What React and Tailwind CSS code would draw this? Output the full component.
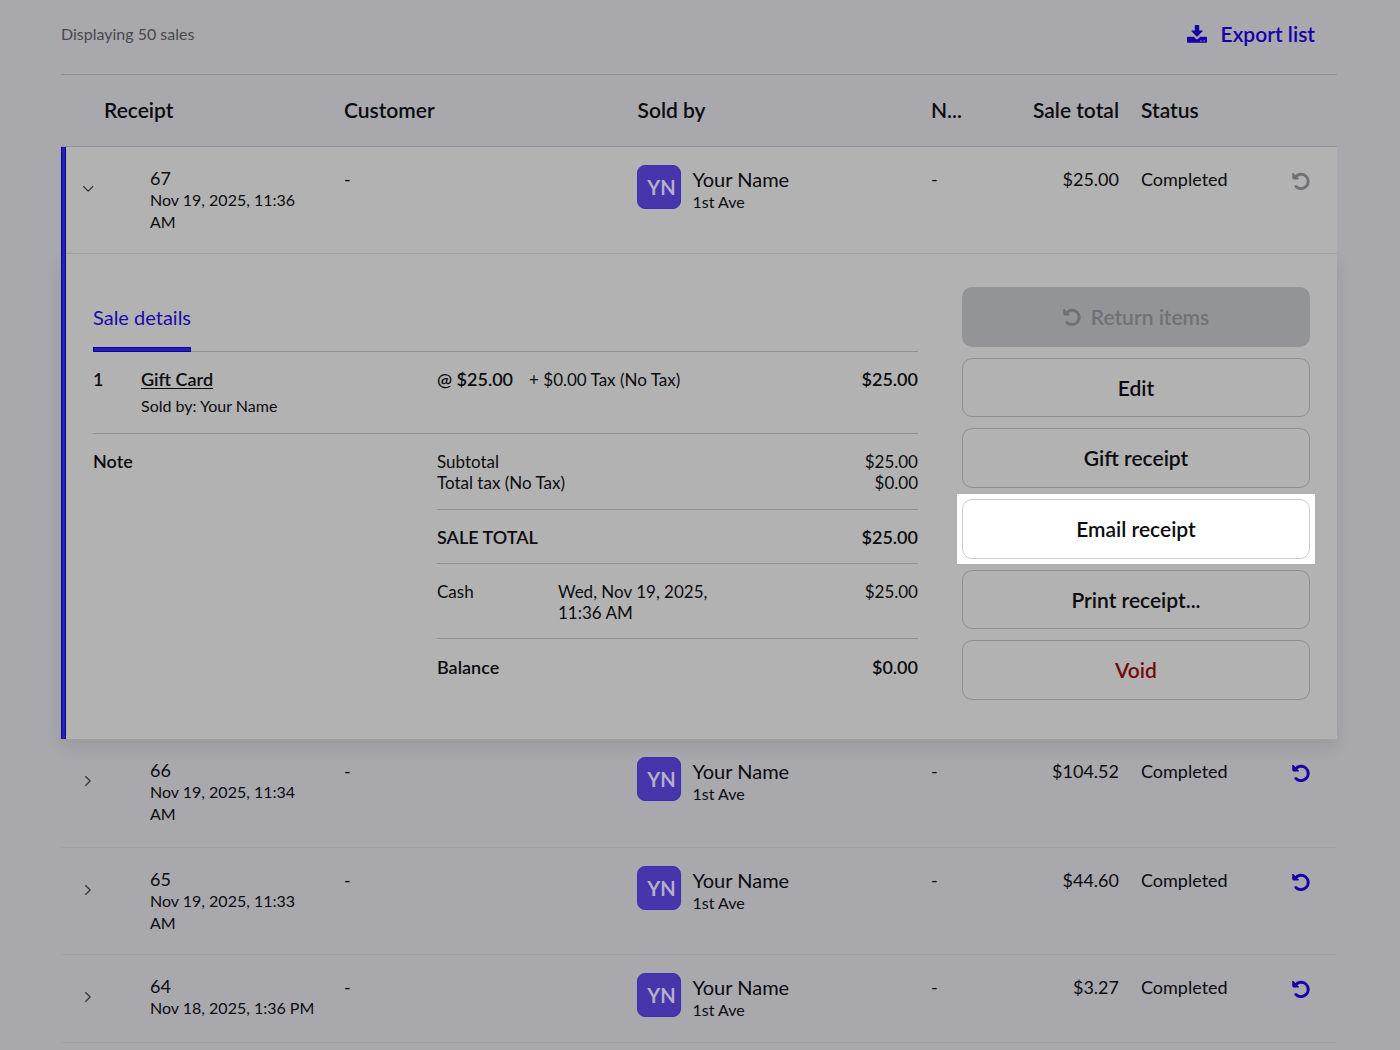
const buttonBase =
  "flex h-full w-full items-center justify-center gap-2 rounded-[10px] text-[21px] font-semibold";

const sales = [
  { id: "67", date: "Nov 19, 2025, 11:36 AM", total: "$25.00", open: true, height: "h-[107px]" },
  { id: "66", date: "Nov 19, 2025, 11:34 AM", total: "$104.52", height: "h-[109px]" },
  { id: "65", date: "Nov 19, 2025, 11:33 AM", total: "$44.60", height: "h-[107px]" },
  { id: "64", date: "Nov 18, 2025, 1:36 PM", total: "$3.27", height: "h-[88px]" },
];

function UndoIcon({ className }) {
  return (
    <svg viewBox="0 0 18 18" className={className} fill="none" aria-hidden="true">
      <path d="M3.4 4.9A7.2 7.2 0 1 1 3.9 14.5" stroke="currentColor" strokeWidth="2.9" strokeLinecap="round" />
      <path d="M.8 1V6.3Q.8 7 1.5 7H6.6Z" fill="currentColor" stroke="currentColor" strokeWidth="1" strokeLinejoin="round" />
    </svg>
  );
}

function DownloadIcon({ className }) {
  return (
    <svg viewBox="0 0 20 18" className={className} fill="currentColor" aria-hidden="true">
      <path d="M7.8.6Q7.8 0 8.4 0h3.2q.6 0 .6.6V5.6h3q.9 0 .3.7L10.5 11.4q-.5.5-1 0L4.500 6.300q-.6-.7.3-.7h3Z" />
      <path
        fillRule="evenodd"
        d="M1 11.800h5.900l1.900 1.900q1.200 1.100 2.400 0l1.900-1.900H19q1 0 1 1V16.800q0 1-1 1H1q-1 0-1-1V12.800q0-1 1-1ZM13.300 15.200v1.200h1.200v-1.200ZM16.500 15.200v1.200h1.200v-1.200Z"
      />
    </svg>
  );
}

function Chevron({ open }) {
  return (
    <svg viewBox="0 0 12 12" className="size-3" fill="none" stroke="currentColor" strokeWidth="1.3" aria-hidden="true">
      <path d={open ? "M1.3 3.3 6.2 8.2l4.900-4.900" : "M3.300 1.200 8.100 6 3.300 10.800"} />
    </svg>
  );
}

function SaleDetails() {
  return (
    <div className="flex h-[485px] gap-11 pt-[33px] pr-[27px] pl-8 shadow-[0_8px_16px_rgba(0,0,0,0.09)]">
      <div className="min-w-0 flex-1 text-[17px] leading-[21px]">
        <div className="flex h-[65px] border-b border-[#919195]">
          <button type="button" className="relative flex h-[65px] pt-[18px] text-xl leading-6 text-[#1a0aa6]">
            Sale details
            <span className="absolute inset-x-0 bottom-0 h-[5px] border border-[#0900a8] bg-[#2721ac]" />
          </button>
        </div>
        <div className="grid h-[82px] grid-cols-[48px_296px_1fr_auto] border-b border-[#919195] pt-[17px]">
          <strong className="text-lg leading-[21px] font-semibold">1</strong>
          <div>
            <a href="#gift-card" className="text-lg leading-[21px] font-semibold underline underline-offset-2">Gift Card</a>
            <p className="pt-1.5 text-base leading-5">Sold by: Your Name</p>
          </div>
          <div className="flex gap-4">
            <strong className="text-lg leading-[21px] font-semibold">@ $25.00</strong>
            <span>+ $0.00 Tax (No Tax)</span>
          </div>
          <strong className="text-lg leading-[21px] font-semibold">$25.00</strong>
        </div>
        <div className="grid grid-cols-[344px_1fr]">
          <h2 className="pt-[17px] text-lg leading-[21px] font-semibold">Note</h2>
          <div>
            <div className="h-[76px] border-b border-[#919195] pt-[17px]">
              <p className="flex justify-between"><span>Subtotal</span><span>$25.00</span></p>
              <p className="flex justify-between"><span>Total tax (No Tax)</span><span>$0.00</span></p>
            </div>
            <p className="flex h-[54px] items-center justify-between border-b border-[#919195] text-lg font-semibold">
              <span>SALE TOTAL</span><span>$25.00</span>
            </p>
            <div className="grid h-[75px] grid-cols-[121px_180px_1fr] border-b border-[#919195] pt-[17px]">
              <span>Cash</span>
              <span>Wed, Nov 19, 2025, 11:36 AM</span>
              <span className="text-right">$25.00</span>
            </div>
            <p className="flex h-[55px] items-center justify-between text-lg font-semibold">
              <span>Balance</span><span>$0.00</span>
            </p>
          </div>
        </div>
      </div>
      <div className="grid h-[413px] w-[348px] auto-rows-fr gap-[11px]">
        <button type="button" disabled className={`${buttonBase} bg-[#939498] text-[#707175]`}>
          <UndoIcon className="mr-0.5 size-[18px]" />
          Return items
        </button>
        <button type="button" className={`${buttonBase} border border-[#8d8e92]`}>Edit</button>
        <button type="button" className={`${buttonBase} border border-[#8d8e92]`}>Gift receipt</button>
        <div className="-m-[5px] bg-white p-[5px]">
          <button type="button" className={`${buttonBase} border border-[#c9cad0]`}>Email receipt</button>
        </div>
        <button type="button" className={`${buttonBase} border border-[#8d8e92]`}>Print receipt...</button>
        <button type="button" className={`${buttonBase} border border-[#8d8e92] text-[#730a0c]`}>Void</button>
      </div>
    </div>
  );
}

function SaleRow({ sale }) {
  const { open } = sale;
  const line = open ? "border-b border-[#9ea3a3]" : "border-b border-[#a0a0a5]";
  const cell = `${line} px-[11px] pt-[21px] text-lg leading-[22px]`;
  return (
    <tr className={`align-top ${sale.height} ${open ? "bg-[#b2b2b2]" : ""}`}>
      <td className={`${line} relative pt-8 pl-[21px] text-[#38383c]`}>
        {open && (
          <span className="absolute top-0 bottom-[-1px] left-0 w-[5px] border-x border-[#0900a8] bg-[#2721ac]" />
        )}
        <button type="button" aria-label={`Toggle sale ${sale.id}`} aria-expanded={!!open} className="flex size-3 pt-1">
          <Chevron open={open} />
        </button>
      </td>
      <td className={cell}>
        <p className="leading-[21px]">{sale.id}</p>
        <p className="text-base leading-[22px]">{sale.date}</p>
      </td>
      <td className={cell}>-</td>
      <td className={`${line} px-[11px] pt-[18px]`}>
        <div className="flex gap-[11px]">
          <span className="flex size-11 items-center justify-center rounded-lg border border-[#3a2fb5] bg-[#4735ac] pl-1 text-xl font-bold text-[#b4b1c8]">YN</span>
          <span>
            <span className="block pt-[3px] text-xl leading-[22px]">Your Name</span>
            <span className="block text-base leading-6">1st Ave</span>
          </span>
        </div>
      </td>
      <td className={cell}>-</td>
      <td className={`${cell} text-right`}>{sale.total}</td>
      <td className={cell}>Completed</td>
      <td className={`${line} pt-[25px] pl-[22px]`}>
        <button type="button" disabled={open} aria-label={`Return sale ${sale.id}`} className={open ? "block text-[#707175]" : "block text-[#1600a8]"}>
          <UndoIcon className="size-[18px]" />
        </button>
      </td>
    </tr>
  );
}

export default function App() {
  const head = "border-y border-[#919195] px-[11px] pb-0.5 text-left font-semibold";
  return (
    <main className="h-screen overflow-hidden bg-[#a8a8ad] pr-[63px] pl-[61px] font-['Lato',sans-serif] text-[#0c0c10]">
      <header className="flex h-[74px] items-center justify-between pr-[22px] pb-[7px]">
        <p className="text-base text-[#48484c]">Displaying 50 sales</p>
        <button type="button" className="flex items-center gap-3.5 text-[21px] font-semibold text-[#1600a8]">
          <DownloadIcon className="h-[18px] w-5" />
          Export list
        </button>
      </header>
      <table className="w-full table-fixed border-separate border-spacing-0">
        <colgroup>
          <col className="w-[78px]" />
          <col className="w-[194px]" />
          <col className="w-[23%]" />
          <col />
          <col className="w-[53px]" />
          <col className="w-[157px]" />
          <col className="w-[140px]" />
          <col className="w-[67px]" />
        </colgroup>
        <thead>
          <tr className="h-[73px] text-[21px]">
            <th colSpan={2} className="border-y border-[#919195] pb-0.5 pl-[43px] text-left font-semibold">Receipt</th>
            <th className={head}>Customer</th>
            <th className={head}>Sold by</th>
            <th className={`${head} whitespace-nowrap`}>N...</th>
            <th className={`${head} text-right`}>Sale total</th>
            <th className={head}>Status</th>
            <td className="border-y border-[#919195]" />
          </tr>
        </thead>
        <tbody>
          <SaleRow sale={sales[0]} />
          <tr className="bg-[#b2b2b2]">
            <td colSpan={8} className="relative p-0">
              <span className="absolute inset-y-0 left-0 w-[5px] border-x border-[#0900a8] bg-[#2721ac]" />
              <SaleDetails />
            </td>
          </tr>
          {sales.slice(1).map((sale) => <SaleRow key={sale.id} sale={sale} />)}
        </tbody>
      </table>
    </main>
  );
}
